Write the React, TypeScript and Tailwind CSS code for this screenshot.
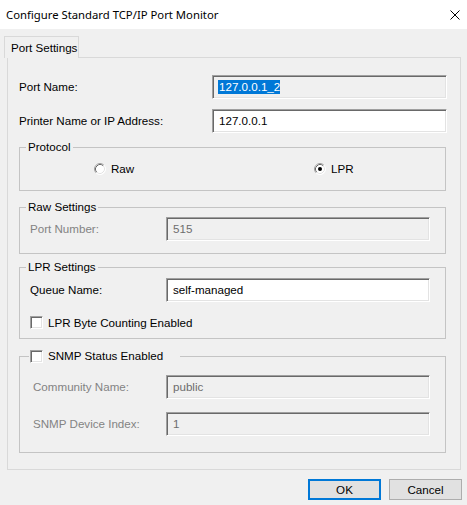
import React from 'react';

// sunken 3D edit box, like a classic Win32 edit control
const sunken =
  'border border-t-[#a0a0a0] border-l-[#a0a0a0] border-r-white border-b-white shadow-[inset_1px_1px_0_#696969,inset_-1px_-1px_0_#e3e3e3]';

function EditBox({ value, width, disabled, readOnly, selected }: {
  value: string;
  width: string;
  disabled?: boolean;
  readOnly?: boolean;
  selected?: boolean;
}) {
  const bg = disabled || readOnly ? 'bg-[#f0f0f0]' : 'bg-white';
  const color = disabled ? 'text-[#6d6d6d]' : 'text-black';
  return (
    <div className={`${width} h-[24px] flex items-center pl-[5px] ${sunken} ${bg} ${color}`}>
      {selected ? (
        <span className="bg-[#0078d7] text-white leading-[14px] pl-[1px]">{value}</span>
      ) : (
        <span className="pl-[1px]">{value}</span>
      )}
    </div>
  );
}

function Checkbox() {
  return <div className={`w-[13px] h-[13px] shrink-0 bg-white ${sunken}`}></div>;
}

function Radio({ checked }: { checked?: boolean }) {
  return (
    <svg width="12" height="12" viewBox="0 0 12 12" className="shrink-0">
      <circle cx="6" cy="6" r="5.5" fill="#ffffff" />
      <path d="M2.11 9.89 A5.5 5.5 0 0 1 9.89 2.11" fill="none" stroke="#a0a0a0" strokeWidth="1" />
      <path d="M9.89 2.11 A5.5 5.5 0 0 1 2.11 9.89" fill="none" stroke="#ffffff" strokeWidth="1" />
      <path d="M2.82 9.18 A4.5 4.5 0 0 1 9.18 2.82" fill="none" stroke="#696969" strokeWidth="1" />
      <path d="M9.18 2.82 A4.5 4.5 0 0 1 2.82 9.18" fill="none" stroke="#e3e3e3" strokeWidth="1" />
      {checked && <circle cx="6" cy="6" r="2" fill="#000000" />}
    </svg>
  );
}

export default function App() {
  return (
    <div className="w-[467px] h-[505px] bg-[#f0f0f0] text-black text-[11.6px] font-['Liberation_Sans',Arial,sans-serif] overflow-hidden">
      {/* Title bar */}
      <div className="h-[29px] bg-white flex items-center justify-between pl-[6px] pr-[7px]">
        <span className="font-['Noto_Sans',sans-serif] text-[11.3px] leading-[16px]">Configure Standard TCP/IP Port Monitor</span>
        <svg width="10" height="10" viewBox="0 0 10 10">
          <path d="M0.5 0.5 L9.5 9.5 M9.5 0.5 L0.5 9.5" stroke="#000" strokeWidth="1" />
        </svg>
      </div>

      {/* Tab strip */}
      <div className="pt-[7px]">
        <div className="relative z-10 -mb-px ml-[4px] w-[75px] h-[22px] border border-b-0 border-[#d9d9d9] bg-[#f0f0f0] flex items-center pl-[6px] whitespace-nowrap">
          Port Settings
        </div>

        {/* Tab page */}
        <div className="mx-[7px] w-[454px] h-[413px] border border-[#d9d9d9] pt-[17px] pl-[11px]">
          <div className="flex items-center h-[24px]">
            <span className="w-[193px]">Port Name:</span>
            <EditBox value="127.0.0.1_2" width="w-[235px]" readOnly selected />
          </div>
          <div className="flex items-center h-[24px] mt-[10px]">
            <span className="w-[193px]">Printer Name or IP Address:</span>
            <EditBox value="127.0.0.1" width="w-[235px]" />
          </div>

          {/* Protocol */}
          <fieldset className="mt-[7px] w-[427px] border border-[#c4c4c4]">
            <legend className="ml-[6px] px-[2px] leading-[14px]">Protocol</legend>
            <div className="pt-[8px] pb-[14px]">
              <div className="flex items-center h-[14px]">
                <div className="ml-[74px] w-[220px] flex items-center gap-[5px]">
                  <Radio />
                  <span>Raw</span>
                </div>
                <div className="flex items-center gap-[5px]">
                  <Radio checked />
                  <span>LPR</span>
                </div>
              </div>
            </div>
          </fieldset>

          {/* Raw Settings */}
          <fieldset className="mt-[9px] w-[427px] border border-[#c4c4c4]">
            <legend className="ml-[6px] px-[2px] leading-[14px]">Raw Settings</legend>
            <div className="pt-[3px] pb-[12px] pl-[10px]">
              <div className="flex items-center h-[24px]">
                <span className="w-[136px] text-[#838383]">Port Number:</span>
                <EditBox value="515" width="w-[264px]" disabled />
              </div>
            </div>
          </fieldset>

          {/* LPR Settings */}
          <fieldset className="mt-[6px] w-[427px] border border-[#c4c4c4]">
            <legend className="ml-[6px] px-[2px] leading-[14px]">LPR Settings</legend>
            <div className="pt-[4px] pb-[9px] pl-[10px]">
              <div className="flex items-center h-[24px]">
                <span className="w-[136px]">Queue Name:</span>
                <EditBox value="self-managed" width="w-[264px]" />
              </div>
              <div className="flex items-center gap-[5px] h-[13px] mt-[14px]">
                <Checkbox />
                <span>LPR Byte Counting Enabled</span>
              </div>
            </div>
          </fieldset>

          {/* SNMP */}
          <fieldset className="mt-[10px] w-[427px] border border-[#c4c4c4]">
            <legend className="ml-[9px] pl-[1px] w-[151px] h-[14px] flex items-center gap-[5px]">
              <Checkbox />
              <span>SNMP Status Enabled</span>
            </legend>
            <div className="pt-[12px] pb-[16px] pl-[13px]">
              <div className="flex items-center h-[24px]">
                <span className="w-[133px] text-[#838383]">Community Name:</span>
                <EditBox value="public" width="w-[264px]" disabled />
              </div>
              <div className="flex items-center h-[24px] mt-[13px]">
                <span className="w-[133px] text-[#838383]">SNMP Device Index:</span>
                <EditBox value="1" width="w-[264px]" disabled />
              </div>
            </div>
          </fieldset>
        </div>
      </div>

      {/* Buttons */}
      <div className="flex justify-end gap-[8px] pr-[5px] mt-[9px]">
        <button className="w-[73px] h-[21px] border-2 border-[#0078d7] bg-[#e1e1e1] flex items-center justify-center">OK</button>
        <button className="w-[73px] h-[21px] border border-[#adadad] bg-[#e1e1e1] flex items-center justify-center">Cancel</button>
      </div>
    </div>
  );
}
